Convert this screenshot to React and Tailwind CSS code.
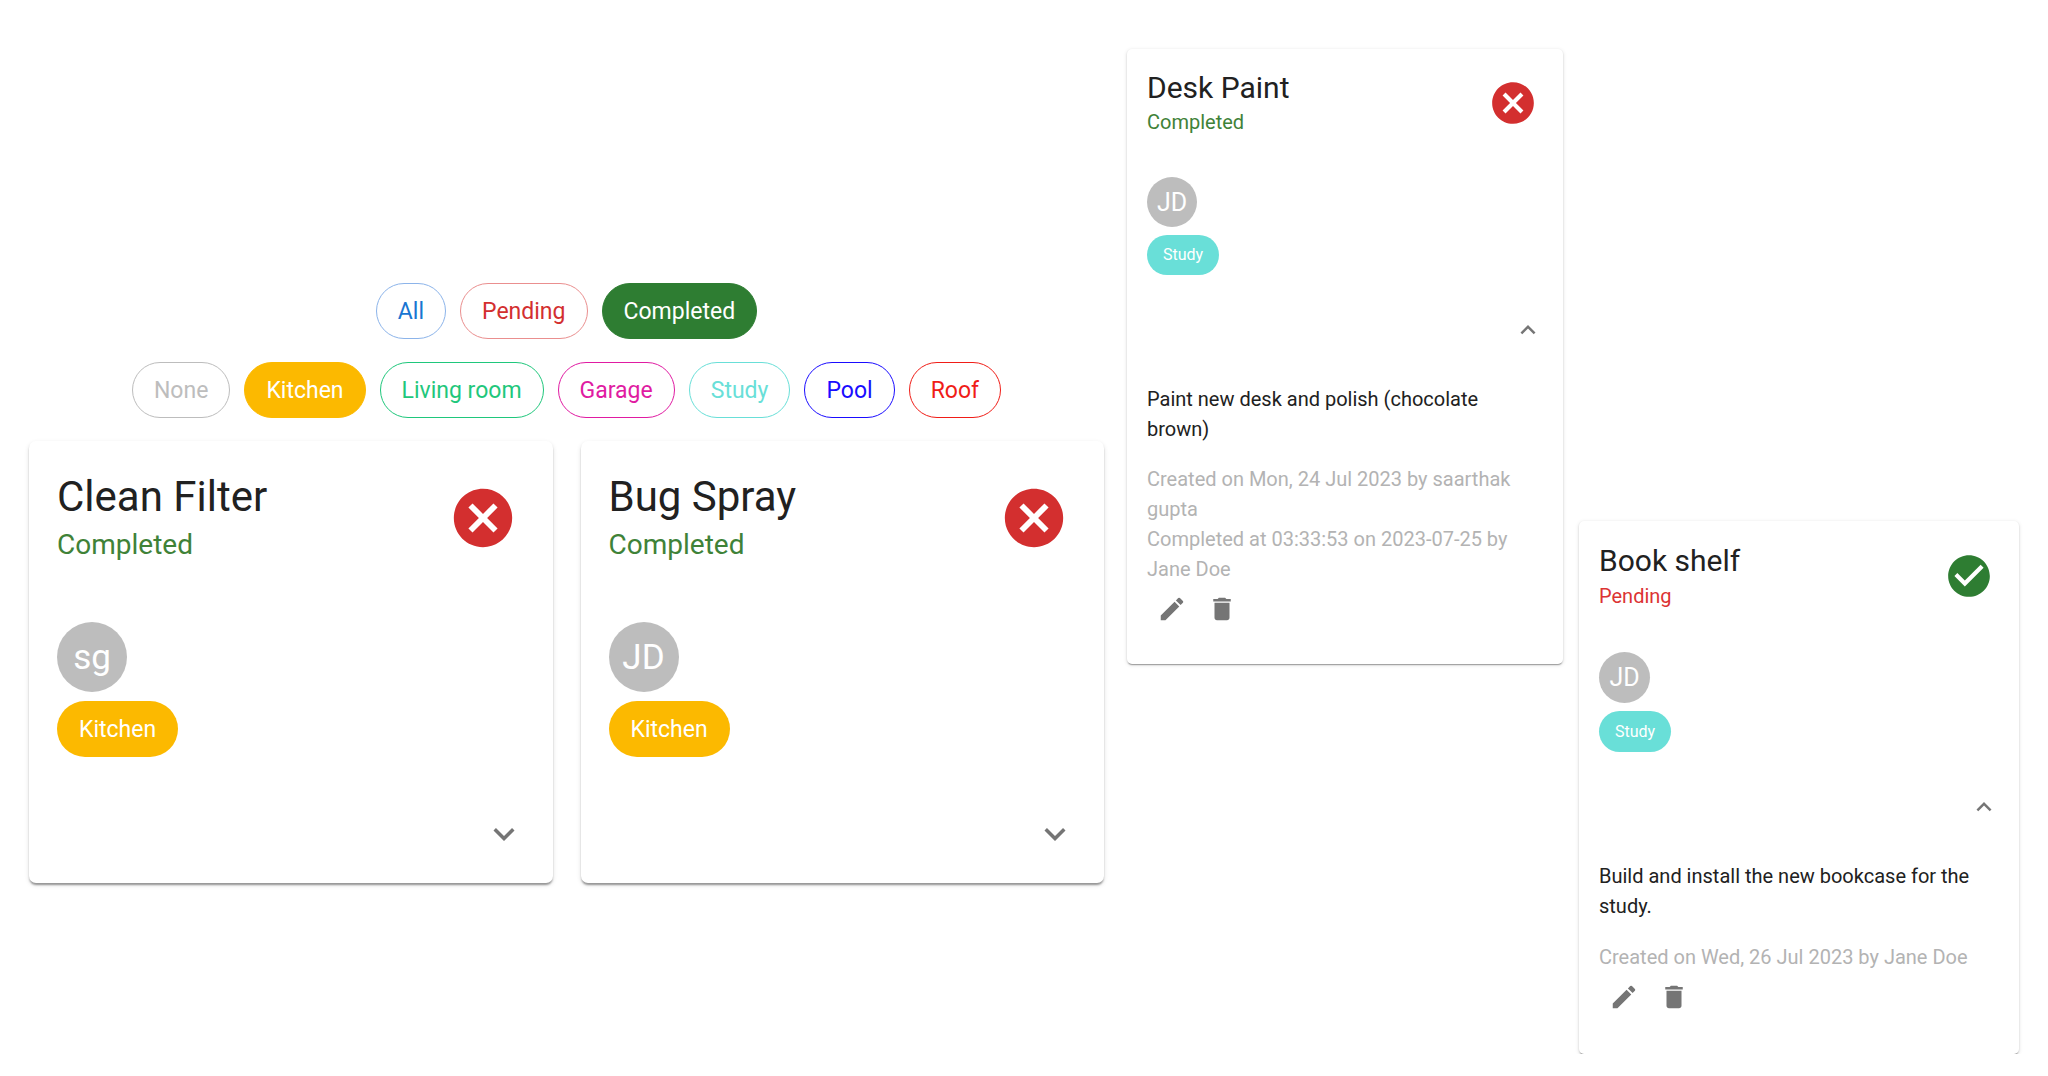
const ICONS = {
  cancel:
    'M12 2C6.47 2 2 6.47 2 12s4.47 10 10 10 10-4.47 10-10S17.53 2 12 2zm5 13.59L15.59 17 12 13.41 8.41 17 7 15.59 10.59 12 7 8.41 8.41 7 12 10.59 15.59 7 17 8.41 13.41 12 17 15.59z',
  check:
    'M12 2C6.48 2 2 6.48 2 12s4.48 10 10 10 10-4.48 10-10S17.52 2 12 2zm-2 15l-5-5 1.41-1.41L10 14.17l7.59-7.59L19 8l-9 9z',
  more: 'M16.59 8.59L12 13.17 7.41 8.59 6 10l6 6 6-6z',
  less: 'M12 8l-6 6 1.41 1.41L12 10.83l4.59 4.58L18 14z',
  edit: 'M3 17.25V21h3.75L17.81 9.94l-3.75-3.75L3 17.25zM20.71 7.04c.39-.39.39-1.02 0-1.41l-2.34-2.34a.9959.9959 0 0 0-1.41 0l-1.83 1.83 3.75 3.75 1.83-1.83z',
  trash: 'M6 19c0 1.1.9 2 2 2h8c1.1 0 2-.9 2-2V7H6v12zM19 4h-3.5l-1-1h-5l-1 1H5v2h14V4z',
};

function Icon({ name, className }) {
  return (
    <svg viewBox="0 0 24 24" fill="currentColor" aria-hidden="true" className={className}>
      <path d={ICONS[name]} />
    </svg>
  );
}

const STATUS_FILTERS = [
  { label: 'All', style: 'border-[#8cb4ea] text-[#1976d2]' },
  { label: 'Pending', style: 'border-[#ea8f8f] text-[#d32f2f]' },
  { label: 'Completed', style: 'border-[#2e7d32] bg-[#2e7d32] text-white', active: true },
];

const ROOM_FILTERS = [
  { label: 'None', style: 'border-[#bdbdbd] text-[#bdbdbd]' },
  { label: 'Kitchen', style: 'border-[#fcb900] bg-[#fcb900] text-white', active: true },
  { label: 'Living room', style: 'border-[#1fc77c] text-[#1fc77c]' },
  { label: 'Garage', style: 'border-[#e01ba2] text-[#e01ba2]' },
  { label: 'Study', style: 'border-[#69dfd8] text-[#69dfd8]' },
  { label: 'Pool', style: 'border-[#1a0cff] text-[#1a0cff]' },
  { label: 'Roof', style: 'border-[#f01d17] text-[#f01d17]' },
];

function FilterRow({ label, filters }) {
  return (
    <div role="group" aria-label={label} className="flex flex-wrap justify-center gap-3.5">
      {filters.map((f) => (
        <button
          key={f.label}
          type="button"
          aria-pressed={Boolean(f.active)}
          className={`h-14 rounded-full border px-[21px] text-[23px] leading-none ${f.style}`}
        >
          {f.label}
        </button>
      ))}
    </div>
  );
}

const SIZES = {
  large: {
    card: 'rounded-[7px] p-7 shadow-[0_3px_2px_-1px_rgba(0,0,0,0.25),0_2px_2px_rgba(0,0,0,0.14),0_2px_5px_rgba(0,0,0,0.12)]',
    title: 'text-[42px] leading-[55px]',
    status: 'text-[28px] leading-[42px]',
    toggle: 'mr-[7px] size-[70px]',
    body: 'mt-14',
    avatar: 'size-[70px] text-[35px]',
    chip: 'mt-[9px] h-14 px-[22px] text-[23px]',
    expand: 'mt-14 size-[42px]',
  },
  medium: {
    card: 'rounded-[5px] p-5 shadow-[0_2px_1px_-1px_rgba(0,0,0,0.25),0_1px_2px_rgba(0,0,0,0.14),0_1px_4px_rgba(0,0,0,0.12)]',
    title: 'text-[30px] leading-[38px]',
    status: 'text-[20px] leading-[30px]',
    toggle: 'mr-[5px] size-[50px]',
    body: 'mt-10',
    avatar: 'size-[50px] text-[25px]',
    chip: 'mt-2 h-10 px-4 text-[16px]',
    expand: 'mt-10 size-[30px]',
    history: 'mt-5',
    actions: 'mb-2.5',
  },
  roomy: {
    card: 'rounded-[5px] p-5 shadow-[0_2px_1px_-1px_rgba(0,0,0,0.25),0_1px_2px_rgba(0,0,0,0.14),0_1px_4px_rgba(0,0,0,0.12)]',
    title: 'text-[30px] leading-[40px]',
    status: 'text-[20px] leading-[30px]',
    toggle: 'mr-[5px] size-[50px]',
    body: 'mt-[41px]',
    avatar: 'size-[51px] text-[25px]',
    chip: 'mt-2 h-[41px] px-4 text-[16px]',
    expand: 'mt-10 size-[30px]',
    history: 'mt-[21px]',
    actions: 'mb-3',
  },
};

function TaskCard({ size, title, done, initials, room, roomStyle, description, history }) {
  const s = SIZES[size];
  return (
    <article className={`bg-white ${s.card}`}>
      <header className="flex items-center justify-between">
        <div>
          <h2 className={s.title}>{title}</h2>
          <p className={`${s.status} ${done ? 'text-[#3f8238]' : 'text-[#dc3333]'}`}>
            {done ? 'Completed' : 'Pending'}
          </p>
        </div>
        <button
          type="button"
          aria-label={done ? 'Mark as pending' : 'Mark as completed'}
          className={`shrink-0 ${s.toggle} ${done ? 'text-[#d32f2f]' : 'text-[#2e7d32]'}`}
        >
          <Icon name={done ? 'cancel' : 'check'} className="size-full" />
        </button>
      </header>
      <div className={`flex flex-col items-start ${s.body}`}>
        <span className={`flex items-center justify-center rounded-full bg-[#bdbdbd] leading-none text-white ${s.avatar}`}>
          {initials}
        </span>
        <span className={`flex items-center rounded-full leading-none text-white ${s.chip} ${roomStyle}`}>{room}</span>
        <button
          type="button"
          aria-label={description ? 'Collapse details' : 'Expand details'}
          aria-expanded={Boolean(description)}
          className={`self-end text-[#757575] ${s.expand}`}
        >
          <Icon name={description ? 'less' : 'more'} className="size-full" />
        </button>
      </div>
      {description && (
        <div className="mt-[39px] pr-3 text-[20px] leading-[30px]">
          <p>{description}</p>
          <div className={`text-[#b3b3b3] ${s.history}`}>
            {history.map((line) => (
              <p key={line}>{line}</p>
            ))}
          </div>
          <div className={`flex text-[#757575] ${s.actions}`}>
            <button type="button" aria-label="Edit task" className="p-2.5">
              <Icon name="edit" className="size-[30px]" />
            </button>
            <button type="button" aria-label="Delete task" className="p-2.5">
              <Icon name="trash" className="size-[30px]" />
            </button>
          </div>
        </div>
      )}
    </article>
  );
}

export default function App() {
  return (
    <main className="grid grid-cols-[1082fr_436fr_440fr] items-start gap-4 bg-white px-[29px] font-['Roboto',sans-serif] text-[#212121]">
      <section className="flex flex-col gap-[23px] pr-[7px] pt-[283px]">
        <FilterRow label="Status" filters={STATUS_FILTERS} />
        <FilterRow label="Room" filters={ROOM_FILTERS} />
        <div className="grid grid-cols-2 gap-7">
          <TaskCard size="large" title="Clean Filter" done initials="sg" room="Kitchen" roomStyle="bg-[#fcb900]" />
          <TaskCard size="large" title="Bug Spray" done initials="JD" room="Kitchen" roomStyle="bg-[#fcb900]" />
        </div>
      </section>
      <section className="pt-[49px]">
        <TaskCard
          size="medium"
          title="Desk Paint"
          done
          initials="JD"
          room="Study"
          roomStyle="bg-[#69dfd8]"
          description="Paint new desk and polish (chocolate brown)"
          history={[
            'Created on Mon, 24 Jul 2023 by saarthak gupta',
            'Completed at 03:33:53 on 2023-07-25 by Jane Doe',
          ]}
        />
      </section>
      <section className="pt-[521px]">
        <TaskCard
          size="roomy"
          title="Book shelf"
          initials="JD"
          room="Study"
          roomStyle="bg-[#69dfd8]"
          description="Build and install the new bookcase for the study."
          history={['Created on Wed, 26 Jul 2023 by Jane Doe']}
        />
      </section>
    </main>
  );
}
